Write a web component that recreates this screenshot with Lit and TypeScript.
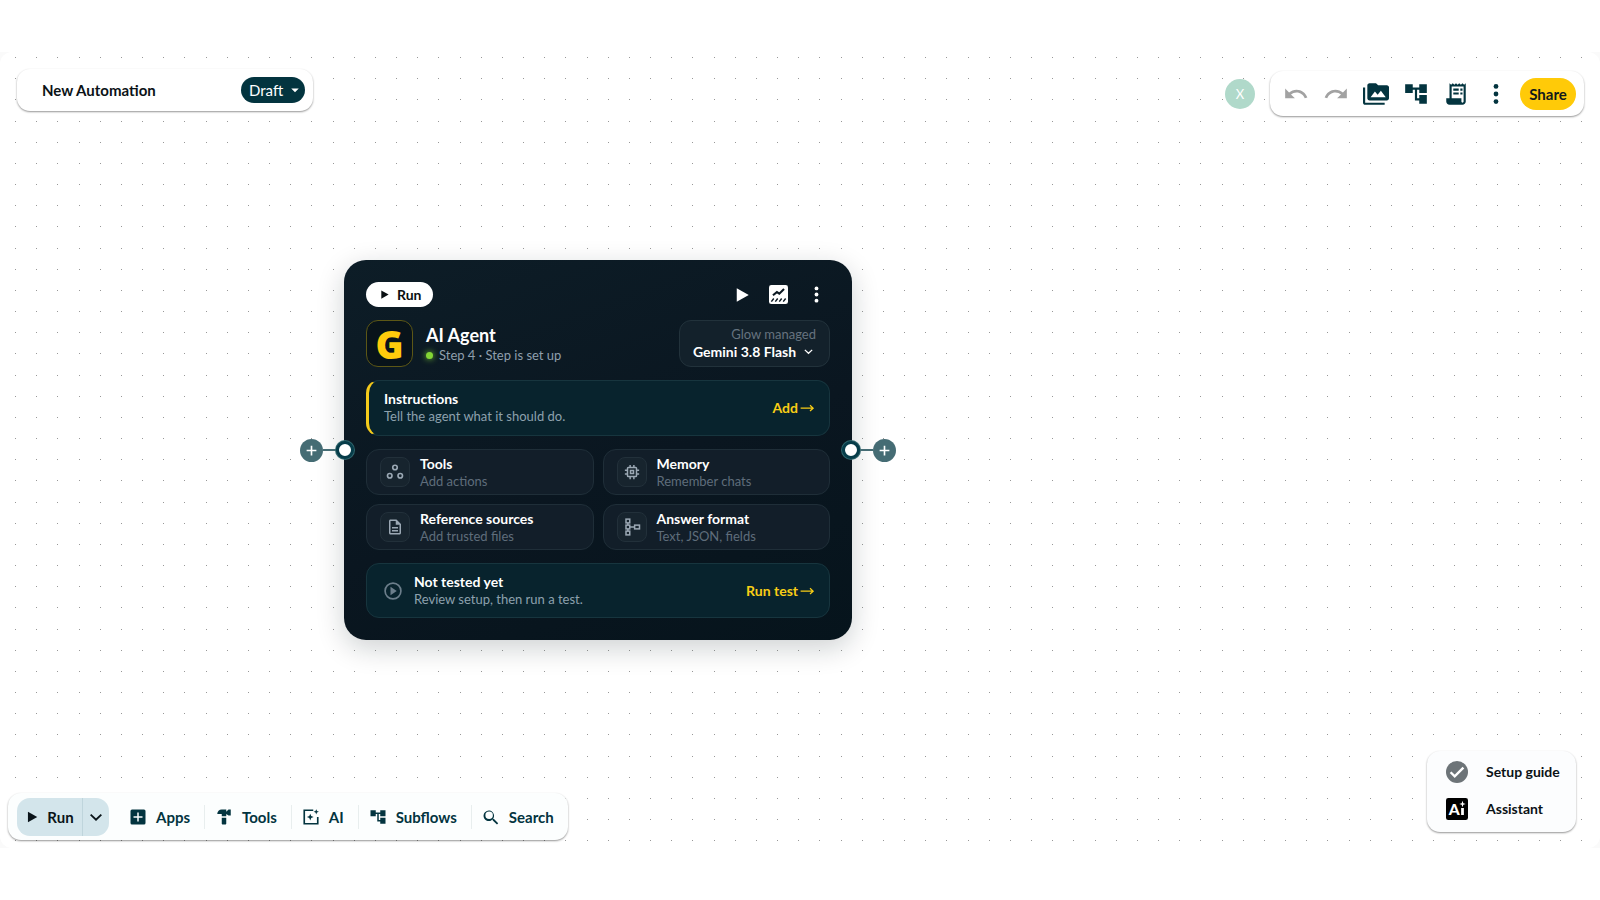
import { LitElement, html, css, svg } from "lit";
import { customElement, property } from "lit/decorators.js";

const ICONS: Record<string, unknown> = {
  undo: svg`<path d="M12.5 8c-2.65 0-5.05.99-6.9 2.6L2 7v9h9l-3.62-3.62c1.39-1.16 3.16-1.88 5.12-1.88 3.54 0 6.55 2.31 7.6 5.5l2.37-.78C21.08 11.03 17.15 8 12.5 8z"/>`,
  redo: svg`<path d="M18.4 10.6C16.55 8.99 14.15 8 11.5 8c-4.65 0-8.58 3.03-9.96 7.22L3.9 16c1.05-3.19 4.05-5.5 7.6-5.5 1.95 0 3.73.72 5.12 1.88L13 16h9V7l-3.6 3.6z"/>`,
  media: svg`<path d="M2 6H0v14c0 1.1.9 2 2 2h18v-2H2V6zm20-2h-8l-2-2H6c-1.1 0-2 .9-2 2v12c0 1.1.9 2 2 2h16c1.1 0 2-.9 2-2V6c0-1.1-.9-2-2-2zM7 15l4-5.300 2.500 3 3-3.700L21 15H7z"/>`,
  tree: svg`<path d="M22 11V3h-7v3H9V3H2v8h7V8h2v10h4v3h7v-8h-7v3h-2V8h2v3z"/>`,
  receipt: svg`<path fill-rule="evenodd" d="M19.500 3.500 18 2l-1.500 1.500L15 2l-1.500 1.500L12 2l-1.500 1.500L9 2 7.500 3.500 6 2v14H3v3c0 1.660 1.340 3 3 3h12c1.660 0 3-1.340 3-3V2zM19 19c0 .550-.450 1-1 1s-1-.450-1-1v-3H8V5h11z"/><path d="M9.500 7h5v2h-5zM16 7h2v2h-2zM9.500 10.500h5v2h-5zM16 10.500h2v2h-2z"/>`,
  more: svg`<circle cx="12" cy="5" r="2.200"/><circle cx="12" cy="12" r="2.200"/><circle cx="12" cy="19" r="2.200"/>`,
  caret: svg`<path d="M7 10l5 5 5-5z"/>`,
  play: svg`<path d="M5 3v18l16-9z"/>`,
  chevron: svg`<path d="M4 8.500l8 7.500 8-7.500" fill="none" stroke="currentColor" stroke-width="2.800"/>`,
  apps: svg`<path fill-rule="evenodd" d="M4 2h16a2 2 0 0 1 2 2v16a2 2 0 0 1-2 2H4a2 2 0 0 1-2-2V4a2 2 0 0 1 2-2zm7 4v5H6v2h5v5h2v-5h5v-2h-5V6z"/>`,
  hammer: svg`<path d="M18 2l-3 3V2H9C5.700 2 3 4.500 3 8h6v3h6V8l3 2h3V2zM9 13v8c0 .600.400 1 1 1h4c.600 0 1-.400 1-1v-8z"/>`,
  sparkle: svg`<path d="M15 3H3v18h18v-9" fill="none" stroke="currentColor" stroke-width="2.200"/><path d="M11 7.500l1.300 3.200 3.200 1.300-3.200 1.300L11 16.500l-1.300-3.200L6.500 12l3.200-1.300zM19 1.500l1 2.600 2.600 1-2.600 1-1 2.600-1-2.600-2.600-1 2.600-1z"/>`,
  search: svg`<path d="M16 14.600h-.8l-.3-.3A7 7 0 1 0 14 15.400l.3.300v.8l5.700 5.500 1.600-1.600zm-6.500 0a5 5 0 1 1 0-10 5 5 0 0 1 0 10z"/>`,
  chart: svg`<path fill-rule="evenodd" d="M3 0h18a3 3 0 0 1 3 3v18a3 3 0 0 1-3 3H3a3 3 0 0 1-3-3V3a3 3 0 0 1 3-3z"/><path d="M5 13l5-4 3 2 6-6" fill="none" stroke="#0b1822" stroke-width="2.600"/><path d="M3 21l3-4M8 21l3-4M13 21l3-4M18 21l3-4" fill="none" stroke="#0b1822" stroke-width="1.800"/>`,
  nodes: svg`<g fill="none" stroke="currentColor" stroke-width="2.200"><circle cx="12" cy="6" r="3"/><circle cx="5" cy="17" r="3"/><circle cx="19" cy="17" r="3"/></g>`,
  chip: svg`<g fill="none" stroke="currentColor" stroke-width="2"><rect x="6" y="6" width="12" height="12" rx="1"/><rect x="10" y="10" width="4" height="4"/><path d="M9.500 6V2.500M14.500 6V2.500M9.500 21.500V18M14.500 21.500V18M2.500 9.500H6M2.500 14.500H6M18 9.500h3.500M18 14.500h3.500"/></g>`,
  doc: svg`<path d="M8 16h8v2H8zm0-4h8v2H8zm6-10H6c-1.100 0-2 .9-2 2v16c0 1.100.9 2 2 2h12c1.100 0 2-.9 2-2V8zm4 18H6V4h7v5h5z"/>`,
  schema: svg`<g fill="none" stroke="currentColor" stroke-width="2"><rect x="4" y="1.500" width="5" height="5"/><rect x="4" y="9.500" width="5" height="5"/><rect x="4" y="17.500" width="5" height="5"/><rect x="15.500" y="9.500" width="6.500" height="5"/><path d="M6.500 6.500v3M6.500 14.500v3M9 12h6.500"/></g>`,
  playCircle: svg`<circle cx="12" cy="12" r="9.500" fill="none" stroke="currentColor" stroke-width="2"/><path d="M9 7v10l7.500-5z"/>`,
  check: svg`<circle cx="12" cy="12" r="12" fill="#6d7478"/><path d="M5 12.300l4.500 4.500 9.500-9.500" fill="none" stroke="#fff" stroke-width="2.600"/>`,
  plus: svg`<path d="M12 3v18M3 12h18" fill="none" stroke="#fff" stroke-width="3"/>`,
  arrow: svg`<path d="M1 13h20M16 8.500l5 4.500-5 4.500" fill="none" stroke="currentColor" stroke-width="2"/>`,
  assistant: svg`<rect width="24" height="24" rx="2.500" fill="#000"/><text x="3" y="18.500" font-family="Lato, sans-serif" font-weight="900" font-size="17" fill="#fff">A</text><path d="M16.500 11h3v7.500h-3zM18 3l.9 2.600 2.600.9-2.600.9L18 10l-.9-2.600-2.600-.9 2.600-.9z" fill="#fff"/>`,
};

const icon = (name: string, size = 16) =>
  html`<svg class="icon" viewBox="0 0 24 24" width=${size} height=${size} fill="currentColor" aria-hidden="true">${ICONS[name]}</svg>`;

const shared = css`
  * { box-sizing: border-box; }
  button, input, select {
    font: inherit;
    color: inherit;
    border: 0;
    margin: 0;
    padding: 0;
    background: none;
  }
  button { cursor: pointer; display: flex; align-items: center; }
  select { appearance: none; cursor: pointer; }
  .icon { display: block; flex: none; }
`;

@customElement("agent-node")
class AgentNode extends LitElement {
  static styles = [
    shared,
    css`
      :host { display: block; position: relative; }
      .card {
        width: 508px;
        padding: 22px;
        border-radius: 22px;
        display: grid;
        gap: 13px;
        color: #fff;
        background: linear-gradient(160deg, #0d1d27, #0a1620 55%, #06141c);
        box-shadow: 0 8px 28px rgba(10, 24, 32, 0.2);
        font-size: 14px;
        line-height: 18px;
      }
      .row { display: flex; align-items: center; }
      .grow { flex: 1; min-width: 0; }
      .run {
        height: 25px;
        padding: 0 11px 0 13px;
        gap: 7px;
        border-radius: 13px;
        background: #fff;
        color: #0a0f12;
        font-weight: 700;
      }
      .actions { display: flex; align-items: center; gap: 18px; margin-left: auto; padding-right: 3px; }
      .logo {
        width: 47px;
        height: 47px;
        border: 1px solid #5c5716;
        border-radius: 12px;
        background: #08131a;
        color: #ffcb0c;
        display: grid;
        place-items: center;
        font: 800 38px/44px "Open Sans", sans-serif;
      }
      .name { margin: 0; font-size: 18px; line-height: 22px; font-weight: 700; }
      .heading { padding: 1px 0 0 13px; }
      .status { display: flex; align-items: center; gap: 6px; color: #8f9fad; font-size: 13px; }
      .led { width: 7px; height: 7px; border-radius: 50%; background: #83d535; box-shadow: 0 0 6px #83d535; }
      .model {
        height: 47px;
        width: 151px;
        padding: 0 13px 2px;
        border: 1px solid #22323b;
        border-radius: 12px;
        background: #13212b;
        display: grid;
        justify-items: end;
        align-content: center;
        line-height: 17px;
      }
      .model label { color: #66737f; font-size: 13px; }
      .picker { display: flex; align-items: center; gap: 6px; padding-right: 2px; font-weight: 700; }
      .picker select { height: 17px; }
      .panel {
        min-height: 55px;
        padding: 0 14px 0 16px;
        border: 1px solid #17353e;
        border-radius: 13px;
        background: #08232d;
        text-align: left;
        width: 100%;
      }
      .instructions { min-height: 56px; border-left: 3px solid #f5cb1b; padding: 0 14px 1px 15px; }
      .title { display: block; font-weight: 700; color: #fff; }
      .note { display: block; font-size: 13px; line-height: 17px; color: #8da1ad; }
      .cta { display: flex; align-items: center; gap: 2px; color: #f8cd15; font-weight: 700; }
      .options { display: grid; grid-template-columns: 1fr 1fr; gap: 9px; }
      .option {
        height: 46px;
        padding: 0 13px;
        gap: 10px;
        border: 1px solid #1f2e38;
        border-radius: 13px;
        background: #121e29;
        text-align: left;
      }
      .option .note { color: #5f6d7b; }
      .tile {
        width: 30px;
        height: 30px;
        border: 1px solid #22303a;
        border-radius: 8px;
        background: #17242e;
        color: #9ba8b4;
        display: grid;
        place-items: center;
      }
      .test { gap: 11px; }
      .test > .icon { color: #6c7e8b; }
      .port { position: absolute; top: 0; bottom: 0; display: flex; align-items: center; }
      .left { right: calc(100% - 10px); }
      .right { left: calc(100% - 10px); flex-direction: row-reverse; }
      .add { width: 23px; height: 23px; border-radius: 50%; background: #456c74; justify-content: center; }
      .wire { width: 13px; height: 2px; background: #456c74; }
      .dot { width: 18px; height: 18px; border-radius: 50%; border: 3px solid #063c49; background: #fff; box-shadow: 0 0 0 1px #2e646b; }
    `,
  ];

  private port(side: string) {
    return html`<div class="port ${side}">
      <button class="add" aria-label="Add step">${icon("plus", 13)}</button>
      <span class="wire"></span><span class="dot"></span>
    </div>`;
  }

  private option(name: string, title: string, note: string) {
    return html`<button class="option">
      <span class="tile">${icon(name, 18)}</span>
      <span><span class="title">${title}</span><span class="note">${note}</span></span>
    </button>`;
  }

  render() {
    return html`
      <article class="card">
        <div class="row">
          <button class="run">${icon("play", 11)}Run</button>
          <div class="actions">
            <button aria-label="Run step">${icon("play", 18)}</button>
            <button aria-label="Results">${icon("chart", 19)}</button>
            <button aria-label="More">${icon("more", 21)}</button>
          </div>
        </div>
        <div class="row">
          <div class="logo">G</div>
          <div class="grow heading">
            <h2 class="name">AI Agent</h2>
            <div class="status"><span class="led"></span>Step 4 · Step is set up</div>
          </div>
          <div class="model">
            <label for="model">Glow managed</label>
            <div class="picker">
              <select id="model"><option>Gemini 3.8 Flash</option></select>
              ${icon("chevron", 11)}
            </div>
          </div>
        </div>
        <button class="panel instructions">
          <span class="grow"><span class="title">Instructions</span><span class="note">Tell the agent what it should do.</span></span>
          <span class="cta">Add ${icon("arrow", 15)}</span>
        </button>
        <div class="options">
          ${this.option("nodes", "Tools", "Add actions")}
          ${this.option("chip", "Memory", "Remember chats")}
          ${this.option("doc", "Reference sources", "Add trusted files")}
          ${this.option("schema", "Answer format", "Text, JSON, fields")}
        </div>
        <button class="panel test">
          ${icon("playCircle", 20)}
          <span class="grow"><span class="title">Not tested yet</span><span class="note">Review setup, then run a test.</span></span>
          <span class="cta">Run test ${icon("arrow", 15)}</span>
        </button>
      </article>
      ${this.port("left")} ${this.port("right")}
    `;
  }
}

@customElement("dot-grid")
class DotGrid extends LitElement {
  static styles = css`
    :host { display: block; }
    svg { display: block; width: 100%; height: 100%; }
  `;
  @property({ type: Number }) tile = 127;
  @property({ type: Number }) count = 6;

  render() {
    const steps = Array.from({ length: this.count }, (_, i) => Math.round((i * this.tile) / this.count));
    return html`<svg aria-hidden="true">
      <defs>
        <pattern id="dots" x="15" y="5" width=${this.tile} height=${this.tile} patternUnits="userSpaceOnUse">
          ${steps.map((y) => steps.map((x) => svg`<rect x=${x} y=${y} width="1" height="1" fill="#989898"/>`))}
        </pattern>
      </defs>
      <rect width="100%" height="100%" fill="url(#dots)"/>
    </svg>`;
  }
}

@customElement("app-root")
class AppRoot extends LitElement {
  static styles = [
    shared,
    css`
      :host {
        display: flex;
        flex-direction: column;
        min-height: 100vh;
        padding: 52px 0;
        box-sizing: border-box;
        background: #fff;
        color: #0b1216;
        font: 400 15px/20px Lato, "Open Sans", sans-serif;
      }
      .frame { flex: 1; display: flex; background: #fafafa; }
      .canvas {
        flex: 1;
        position: relative;
        overflow: hidden;
        border-radius: 12px;
        background: #fff;
        display: flex;
        flex-direction: column;
        justify-content: space-between;
      }
      dot-grid { position: absolute; inset: 0; }
      agent-node { position: absolute; left: 344px; top: 208px; }
      .top, .bottom { position: relative; display: flex; justify-content: space-between; }
      .top { padding: 17px 16px 0 17px; align-items: flex-start; }
      .bottom { padding: 0 24px 8px 8px; align-items: flex-end; }
      .bar {
        display: flex;
        align-items: center;
        background: #fff;
        border-radius: 13px;
        box-shadow: 0 1px 2px rgba(0, 0, 0, 0.42);
      }
      .titlebar { height: 42px; width: 296px; padding: 0 8px 0 25px; }
      .titlebar input { flex: 1; min-width: 0; font-weight: 700; font-size: 15px; }
      .draft {
        display: flex;
        align-items: center;
        height: 26px;
        width: 64px;
        padding: 0 1px 0 8px;
        border-radius: 13px;
        background: #03343f;
        color: #fff;
        justify-content: space-between;
      }
      .right { display: flex; align-items: center; gap: 15px; padding-top: 2px; }
      .avatar {
        width: 30px;
        height: 30px;
        border-radius: 50%;
        background: #b0d9ca;
        color: #fff;
        display: grid;
        place-items: center;
        font-size: 13px;
      }
      .tools { height: 45px; padding: 0 8px 0 13px; gap: 14px; color: #03343f; }
      .muted { color: #a2a2a2; }
      .share {
        height: 32px;
        width: 56px;
        justify-content: center;
        border-radius: 16px;
        background: #ffca08;
        color: #12191c;
        font-weight: 700;
        margin-left: -3px;
      }
      .dock { height: 47px; padding: 0 14px 0 9px; color: #03343f; font-weight: 700; background: #fcfefe; }
      .split {
        display: flex;
        height: 38px;
        width: 92px;
        border-radius: 13px;
        background: #d3e5eb;
        color: #0a1419;
        margin-right: 10px;
        overflow: hidden;
      }
      .split button { justify-content: center; }
      .split .main { width: 66px; gap: 8px; border-right: 1px solid #bfd5dc; }
      .split .more { flex: 1; }
      .dock .entry { height: 24px; gap: 9px; padding: 0 14px 0 10px; }
      .entry + .entry { border-left: 1px solid #e8eeee; }
      .dock .entry:last-child { padding-right: 0; }
      .help {
        display: grid;
        gap: 15px;
        width: 149px;
        padding: 10px 0 12px 19px;
        margin-bottom: 8px;
        background: #fcfdfe;
        justify-items: start;
        align-items: center;
        font-weight: 700;
        font-size: 14px;
      }
      .help button { height: 22px; gap: 18px; }
    `,
  ];

  private entries = [
    ["apps", "Apps"],
    ["hammer", "Tools"],
    ["sparkle", "AI"],
    ["tree", "Subflows"],
    ["search", "Search"],
  ];

  render() {
    return html`
      <div class="frame">
        <main class="canvas">
          <dot-grid></dot-grid>
          <agent-node></agent-node>
          <header class="top">
            <div class="bar titlebar">
              <input aria-label="Automation name" value="New Automation" />
              <div class="draft">
                <select aria-label="Status"><option>Draft</option></select>
                ${icon("caret", 18)}
              </div>
            </div>
            <div class="right">
              <div class="avatar">X</div>
              <div class="bar tools">
                <button class="muted" aria-label="Undo">${icon("undo", 26)}</button>
                <button class="muted" aria-label="Redo">${icon("redo", 26)}</button>
                <button aria-label="Media">${icon("media", 26)}</button>
                <button aria-label="Structure">${icon("tree", 26)}</button>
                <button aria-label="Logs">${icon("receipt", 26)}</button>
                <button aria-label="More">${icon("more", 26)}</button>
                <button class="share">Share</button>
              </div>
            </div>
          </header>
          <footer class="bottom">
            <nav class="bar dock">
              <div class="split">
                <button class="main">${icon("play", 14)}Run</button>
                <button class="more" aria-label="Run options">${icon("chevron", 16)}</button>
              </div>
              ${this.entries.map(([name, text]) => html`<button class="entry">${icon(name, 18)}${text}</button>`)}
            </nav>
            <div class="bar help">
              <button>${icon("check", 22)}Setup guide</button>
              <button>${icon("assistant", 22)}Assistant</button>
            </div>
          </footer>
        </main>
      </div>
    `;
  }
}
